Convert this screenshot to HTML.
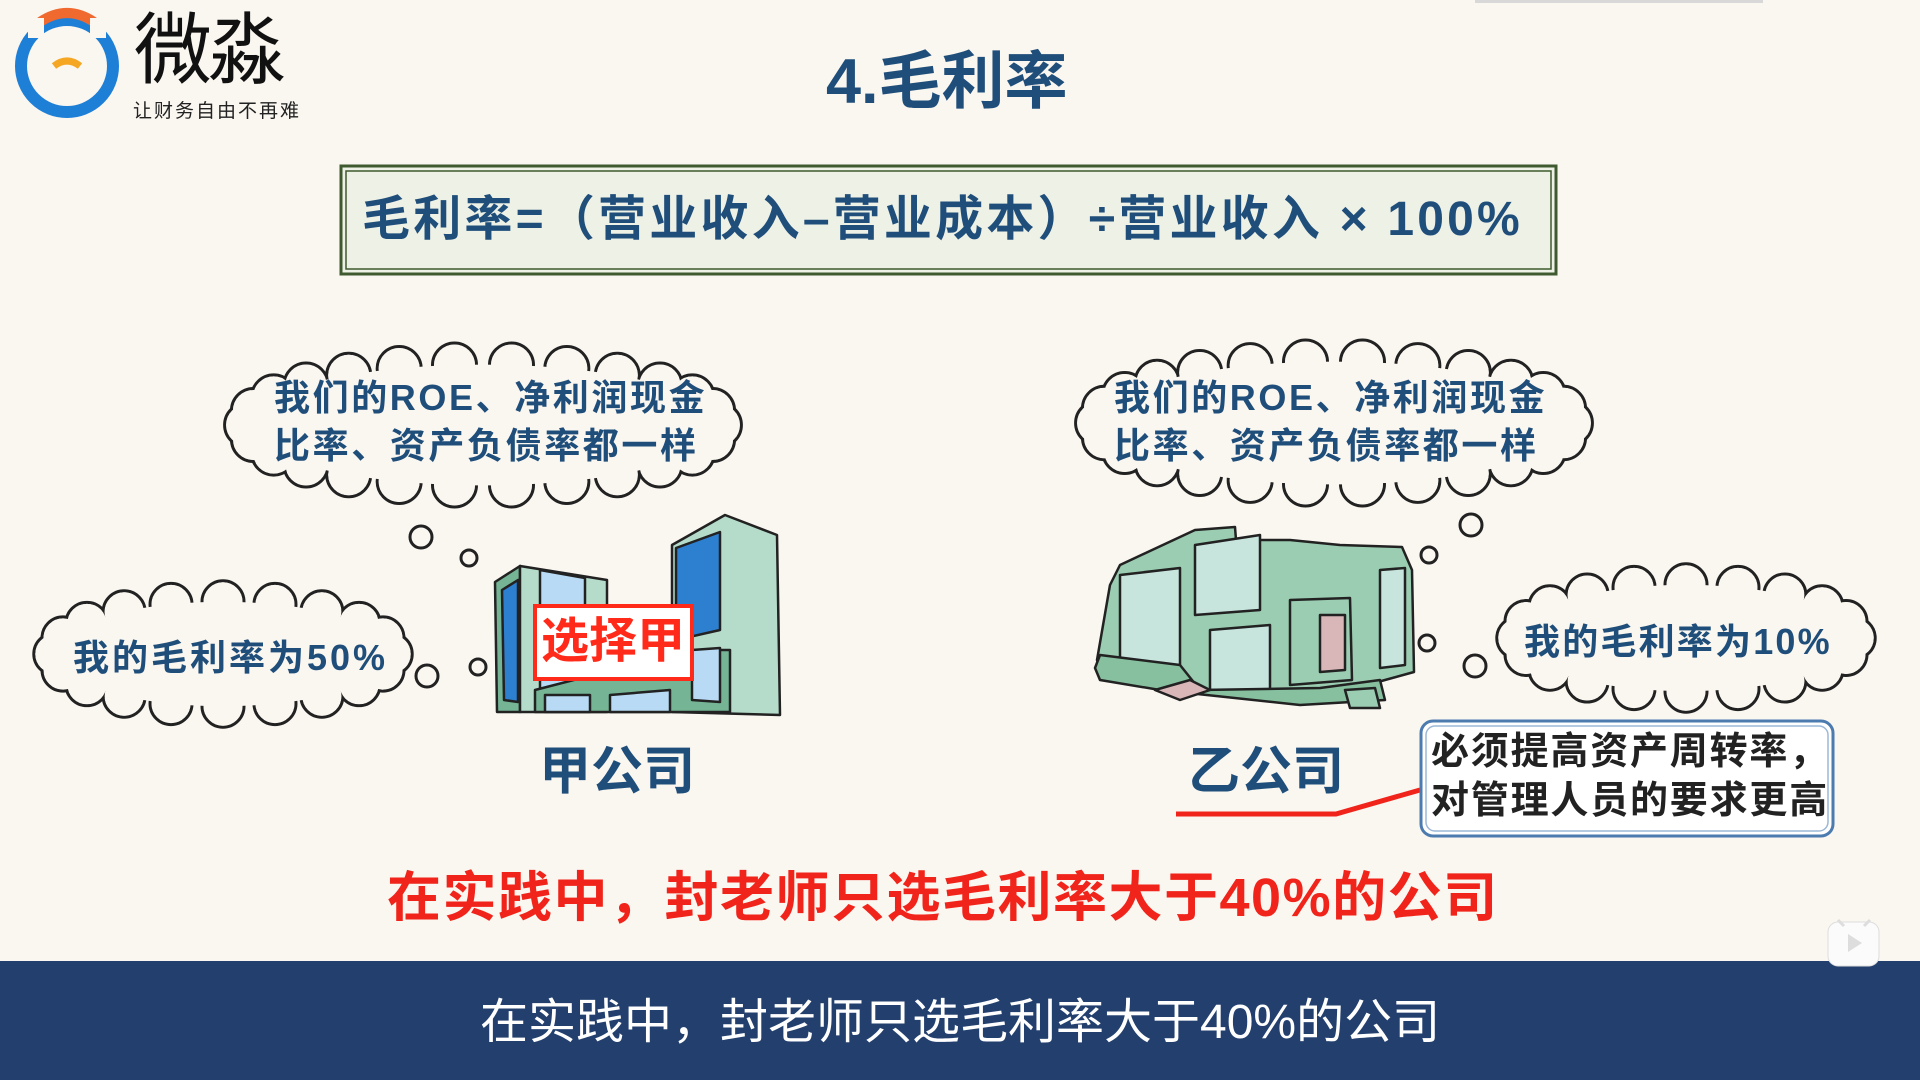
<!DOCTYPE html>
<html><head><meta charset="utf-8">
<style>
*{margin:0;padding:0;box-sizing:border-box}
body{width:1920px;height:1080px;overflow:hidden;background:#faf6f0;position:relative;font-family:"Liberation Sans","Noto Sans CJK SC",sans-serif}
.t{position:absolute;white-space:nowrap;font-weight:700;font-family:"Liberation Sans","Noto Sans CJK SC",sans-serif}
.blue{color:#1f4e7a}
svg{position:absolute;left:0;top:0}
</style></head><body>
<svg id="g" width="1920" height="1080" viewBox="0 0 1920 1080">
  <rect x="1475" y="0" width="288" height="3" fill="#d8d8d8"/>
  <circle cx="67" cy="66" r="46" fill="none" stroke="#1e7fd6" stroke-width="12"/>
  <path d="M40 22 Q67 4 94 22" fill="none" stroke="#f06a30" stroke-width="10"/>
  <rect x="28" y="18" width="16" height="20" fill="#faf6f0"/>
  <rect x="90" y="18" width="16" height="20" fill="#faf6f0"/>
  <path d="M54 66 Q67 56 80 66" fill="none" stroke="#f5a623" stroke-width="7"/>
  <rect x="341" y="166" width="1215" height="108" fill="#eef1e6" stroke="#3f5a2e" stroke-width="3"/>
  <rect x="346" y="171" width="1205" height="98" fill="none" stroke="#3f5a2e" stroke-width="1.5"/>
  <g id="clouds"></g>
  <g fill="#faf6f0" stroke="#222" stroke-width="3">
    <circle cx="421" cy="537" r="11"/><circle cx="469" cy="558" r="8"/>
    <circle cx="427" cy="676" r="11"/><circle cx="478" cy="667" r="8"/>
    <circle cx="1471" cy="525" r="11"/><circle cx="1429" cy="555" r="8"/>
    <circle cx="1427" cy="643" r="8"/><circle cx="1475" cy="666" r="11"/>
  </g>
  <g stroke="#222" stroke-width="2.5" stroke-linejoin="round">
    <polygon points="672,545 725,515 777,535 780,715 672,712" fill="#b5dcca"/>
    <polygon points="676,548 720,532 720,630 676,640" fill="#2d7fd0"/>
    <polygon points="495,582 520,566 520,712 497,712" fill="#75b595"/>
    <polygon points="502,590 518,580 518,702 504,700" fill="#2d7fd0"/>
    <polygon points="520,566 607,580 607,712 520,712" fill="#b5dcca"/>
    <polygon points="540,570 585,578 585,700 540,700" fill="#b8daf4"/>
    <polygon points="535,690 690,650 730,650 730,712 535,712" fill="#75b595"/>
    <polygon points="545,695 590,695 590,712 545,712" fill="#b8daf4"/>
    <polygon points="610,695 670,690 670,712 610,712" fill="#b8daf4"/>
    <polygon points="692,650 720,648 720,702 692,700" fill="#b8daf4"/>
  </g>
  <rect x="535" y="606" width="157" height="73" fill="#fff" stroke="#ff2a1a" stroke-width="4"/>
  <g stroke="#222" stroke-width="2.5" stroke-linejoin="round">
    <polygon points="1097,660 1110,585 1120,565 1195,530 1235,527 1236,540 1290,540 1340,545 1402,547 1412,570 1414,672 1385,680 1350,690 1200,690 1180,670 1100,668" fill="#9bcdb2"/>
    <polygon points="1120,575 1180,568 1180,680 1120,672" fill="#c7e4dd"/>
    <polygon points="1195,545 1260,535 1260,610 1195,615" fill="#c7e4dd"/>
    <polygon points="1210,630 1270,625 1270,690 1210,690" fill="#c7e4dd"/>
    <polygon points="1290,600 1350,598 1352,680 1290,685" fill="#9bcdb2"/>
    <polygon points="1320,615 1345,615 1345,670 1320,672" fill="#d9b6b8"/>
    <polygon points="1380,570 1405,568 1405,665 1380,668" fill="#c7e4dd"/>
    <polygon points="1095,668 1100,655 1180,665 1200,690 1320,688 1380,680 1385,700 1300,705 1160,690 1100,680" fill="#86c09f"/>
    <polygon points="1155,690 1190,680 1210,690 1180,700" fill="#d9b6b8"/>
    <polygon points="1345,690 1375,688 1380,708 1350,708" fill="#9bcdb2"/>
  </g>
  <polyline points="1176,814 1336,814 1420,790" fill="none" stroke="#f0241a" stroke-width="5"/>
  <rect x="1421" y="721" width="412" height="115" rx="12" fill="#fff" stroke="#4c7bb0" stroke-width="3"/>
  <rect x="1426" y="726" width="402" height="105" rx="9" fill="none" stroke="#9cb8d6" stroke-width="1.5"/>
  <rect x="0" y="961" width="1920" height="119" fill="#223f6e"/>
  <rect x="1828" y="922" width="51" height="44" rx="10" fill="#fbfbfb" stroke="#ddd" stroke-width="1"/>
  <path d="M1838 920 l6 6 M1870 920 l-6 6" stroke="#ddd" stroke-width="3"/>
  <path d="M1848 934 l14 9 l-14 9z" fill="#ddd"/>
</svg>

<div class="t" style="left:134px;top:8px;font-size:78px;font-weight:400;color:#111;letter-spacing:-4px;line-height:84px">微淼</div>
<div class="t" style="left:133px;top:96px;font-size:19px;font-weight:400;color:#222;letter-spacing:2px">让财务自由不再难</div>
<div class="t blue" style="left:826px;top:44px;font-size:63px;line-height:76px">4.毛利率</div>
<div class="t blue" style="left:362px;top:190px;font-size:48px;line-height:60px;letter-spacing:3.2px">毛利率=（营业收入–营业成本）÷营业收入 × 100%</div>

<div class="t blue" style="left:274px;top:374px;font-size:36px;line-height:48px;letter-spacing:2.6px">我们的ROE、净利润现金<br>比率、资产负债率都一样</div>
<div class="t blue" style="left:1114px;top:374px;font-size:36px;line-height:48px;letter-spacing:2.6px">我们的ROE、净利润现金<br>比率、资产负债率都一样</div>
<div class="t blue" style="left:73px;top:634px;font-size:36px;line-height:48px;letter-spacing:3px">我的毛利率为50%</div>
<div class="t blue" style="left:1524px;top:618px;font-size:36px;line-height:48px;letter-spacing:2.2px">我的毛利率为10%</div>
<div class="t" style="left:541px;top:612px;font-size:48px;line-height:60px;color:#ff2a1a">选择甲</div>
<div class="t blue" style="left:539px;top:740px;font-size:52px;line-height:64px">甲公司</div>
<div class="t blue" style="left:1188px;top:740px;font-size:52px;line-height:64px">乙公司</div>
<div class="t" style="left:1431px;top:728px;font-size:38px;line-height:49px;color:#222;letter-spacing:1.8px">必须提高资产周转率，<br>对管理人员的要求更高</div>
<div class="t" style="left:387px;top:864px;font-size:54px;line-height:68px;color:#f0241a;letter-spacing:1.5px">在实践中，封老师只选毛利率大于40%的公司</div>
<div class="t" style="left:480px;top:992px;font-size:48px;line-height:62px;font-weight:400;color:#fff">在实践中，封老师只选毛利率大于40%的公司</div>

<script>
(function(){
var NS="http://www.w3.org/2000/svg",g=document.getElementById("clouds");
function el(n,a){var e=document.createElementNS(NS,n);for(var k in a)e.setAttribute(k,a[k]);g.appendChild(e);return e;}
function cloud(cx,cy,rx,ry,n,r){
  var pts=[];for(var i=0;i<n;i++){var a=2*Math.PI*i/n;pts.push([cx+(rx-r*0.8)*Math.cos(a),cy+(ry-r*0.8)*Math.sin(a)]);}
  pts.forEach(function(p){el("circle",{cx:p[0],cy:p[1],r:r,fill:"#faf6f0",stroke:"#222","stroke-width":3});});
  pts.forEach(function(p){el("circle",{cx:p[0],cy:p[1],r:r-1.5,fill:"#faf6f0"});});
  el("ellipse",{cx:cx,cy:cy,rx:rx-r*0.8,ry:ry-r*0.8,fill:"#faf6f0"});
}
cloud(483,425,254,78,26,22);
cloud(1334,423,254,79,26,22);
cloud(223,654,185,69,20,21);
cloud(1686,638,185,70,20,21);
})();
</script>
</body></html>
